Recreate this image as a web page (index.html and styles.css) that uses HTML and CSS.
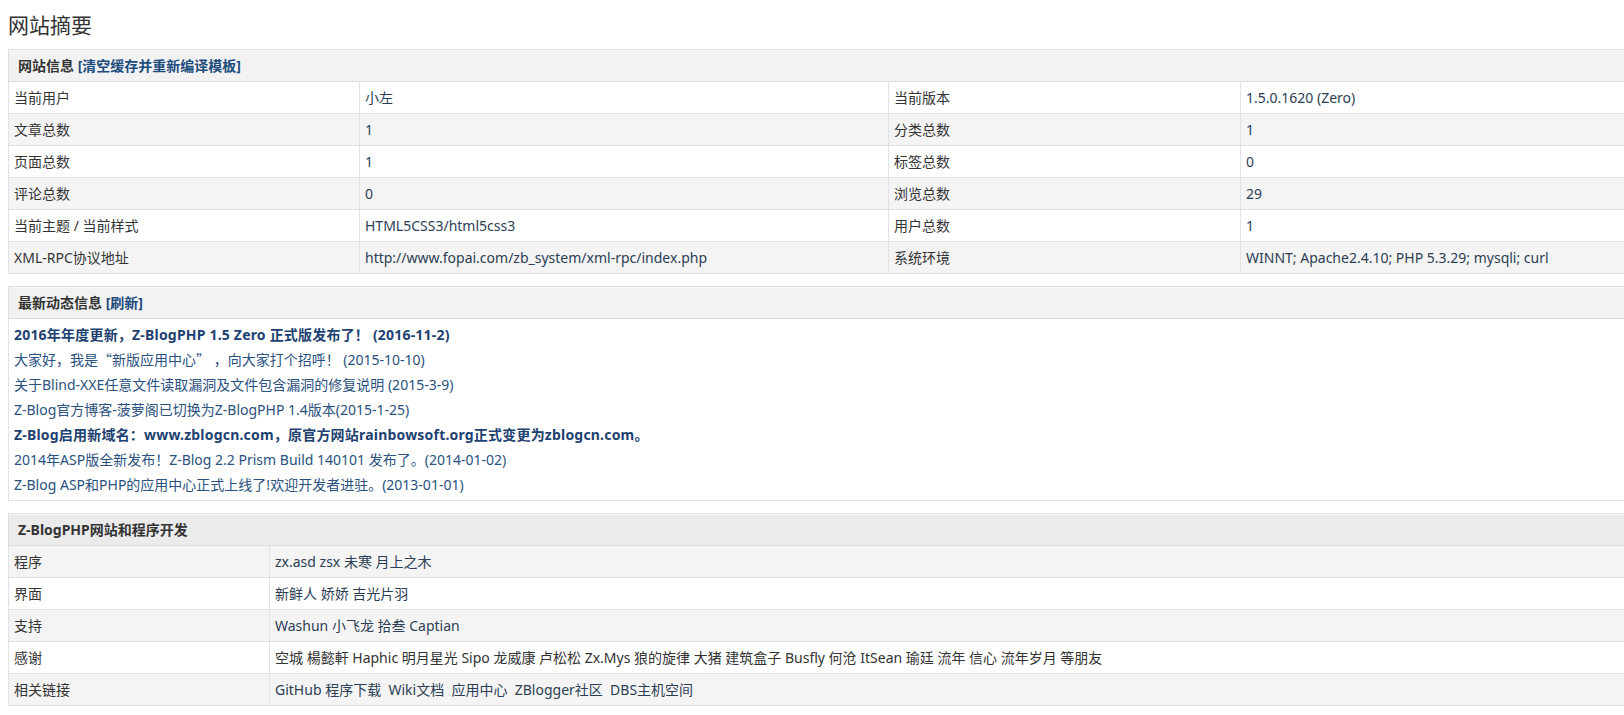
FILE: index.html
```html
<!DOCTYPE html>
<html lang="zh-CN">

<head>
  <meta charset="UTF-8" />
  <title>网站摘要</title>
  <link rel="stylesheet" href="styles.css">
</head>

<body>
  <div class="main">
    <h1 class="title">网站摘要</h1>

    <table class="tableBorder info">
      <colgroup>
        <col class="c1">
        <col class="c2">
        <col class="c3">
        <col>
      </colgroup>
      <tr>
        <th colspan="4">网站信息 <a href="#">[清空缓存并重新编译模板]</a></th>
      </tr>
      <tr>
        <td>当前用户</td>
        <td>小左</td>
        <td>当前版本</td>
        <td>1.5.0.1620 (Zero)</td>
      </tr>
      <tr>
        <td>文章总数</td>
        <td>1</td>
        <td>分类总数</td>
        <td>1</td>
      </tr>
      <tr>
        <td>页面总数</td>
        <td>1</td>
        <td>标签总数</td>
        <td>0</td>
      </tr>
      <tr>
        <td>评论总数</td>
        <td>0</td>
        <td>浏览总数</td>
        <td>29</td>
      </tr>
      <tr>
        <td>当前主题 / 当前样式</td>
        <td>HTML5CSS3/html5css3</td>
        <td>用户总数</td>
        <td>1</td>
      </tr>
      <tr>
        <td>XML-RPC协议地址</td>
        <td>http://www.fopai.com/zb_system/xml-rpc/index.php</td>
        <td>系统环境</td>
        <td>WINNT; Apache2.4.10; PHP 5.3.29; mysqli; curl</td>
      </tr>
    </table>

    <table class="tableBorder news">
      <tr>
        <th>最新动态信息 <a href="#">[刷新]</a></th>
      </tr>
      <tr>
        <td class="newsList">
          <a href="#" class="strong">2016年年度更新，Z-BlogPHP 1.5 Zero 正式版发布了！ (2016-11-2)</a>
          <a href="#">大家好，我是<span class="cjk">“</span>新版应用中心<span class="cjk">”</span> ，向大家打个招呼！ (2015-10-10)</a>
          <a href="#">关于Blind-XXE任意文件读取漏洞及文件包含漏洞的修复说明 (2015-3-9)</a>
          <a href="#">Z-Blog官方博客-菠萝阁已切换为Z-BlogPHP 1.4版本(2015-1-25)</a>
          <a href="#" class="strong">Z-Blog启用新域名：www.zblogcn.com，原官方网站rainbowsoft.org正式变更为zblogcn.com。</a>
          <a href="#">2014年ASP版全新发布！Z-Blog 2.2 Prism Build 140101 发布了。(2014-01-02)</a>
          <a href="#">Z-Blog ASP和PHP的应用中心正式上线了!欢迎开发者进驻。(2013-01-01)</a>
        </td>
      </tr>
    </table>

    <table class="tableBorder thanks">
      <colgroup>
        <col class="c1">
        <col>
      </colgroup>
      <tr>
        <th colspan="2">Z-BlogPHP网站和程序开发</th>
      </tr>
      <tr>
        <td>程序</td>
        <td><a href="#">zx.asd</a> <a href="#">zsx</a> <a href="#">未寒</a> <a href="#">月上之木</a></td>
      </tr>
      <tr>
        <td>界面</td>
        <td><a href="#">新鲜人</a> <a href="#">娇娇</a> <a href="#">吉光片羽</a></td>
      </tr>
      <tr>
        <td>支持</td>
        <td><a href="#">Washun</a> <a href="#">小飞龙</a> <a href="#">拾叁</a> <a href="#">Captian</a></td>
      </tr>
      <tr>
        <td>感谢</td>
        <td>空城 楊懿軒 Haphic 明月星光 Sipo 龙威康 卢松松 Zx.Mys 狼的旋律 大猪 建筑盒子 Busfly 何沧 ItSean 瑜廷 流年 信心 流年岁月 等朋友</td>
      </tr>
      <tr>
        <td>相关链接</td>
        <td><a href="#">GitHub</a> <a href="#">程序下载</a>&nbsp; <a href="#">Wiki文档</a>&nbsp; <a href="#">应用中心</a>&nbsp; <a href="#">ZBlogger社区</a>&nbsp; <a href="#">DBS主机空间</a></td>
      </tr>
    </table>
  </div>
</body>

</html>
```

FILE: styles.css
```css
* {
  margin: 0;
  padding: 0;
  box-sizing: border-box;
}

html,
body {
  overflow-x: hidden;
}

body {
  margin: 0;
  background: #fff;
  color: #333;
  font-family: "Noto Sans", "Noto Sans CJK SC", sans-serif;
  font-size: 14px;
}

.main {
  width: 1660px;
  padding: 10px 0 0 8px;
}

.title {
  font-size: 21px;
  font-weight: normal;
  color: #333;
  line-height: 30px;
  height: 39px;
}

a {
  color: #1d4c7d;
  text-decoration: none;
}

.cjk {
  font-family: "Noto Sans CJK SC", sans-serif;
}

.tableBorder {
  width: 100%;
  border-collapse: collapse;
  border: 1px solid #ddd;
  margin-bottom: 12px;
  table-layout: fixed;
}

.tableBorder th {
  text-align: left;
  font-size: 14px;
  font-weight: bold;
  color: #333;
  background: #f2f2f2;
  line-height: 21px;
  padding: 5px 9px;
  border: 1px solid #ddd;
  box-shadow: inset 0 1px 0 #fafafa;
}

.tableBorder th a {
  color: #1d4c7d;
}

.tableBorder td {
  padding: 5px 5px;
  line-height: 21px;
  border: 1px solid #e2e2e2;
  color: #333;
  white-space: nowrap;
  overflow: hidden;
}

.tableBorder tr:nth-child(odd) td {
  background: #f4f4f4;
}

.info .c1 {
  width: 351px;
}

.info .c2 {
  width: 529px;
}

.info .c3 {
  width: 352px;
}

.info td:nth-child(even) {
  color: #2c3e55;
}

.news td.newsList {
  background: #fff;
  padding: 3px 5px;
}

.newsList a {
  display: block;
  line-height: 25px;
  color: #2a5180;
}

.newsList a.strong {
  font-weight: bold;
  color: #1d4170;
  letter-spacing: 0.2px;
}

.thanks th {
  background: #ebebeb;
}

.thanks tr:nth-child(even) td {
  background: #f4f4f4;
}

.thanks tr:nth-child(odd) td {
  background: #fff;
}

.thanks .c1 {
  width: 261px;
}

.thanks td a {
  color: #2c3e55;
}
```
